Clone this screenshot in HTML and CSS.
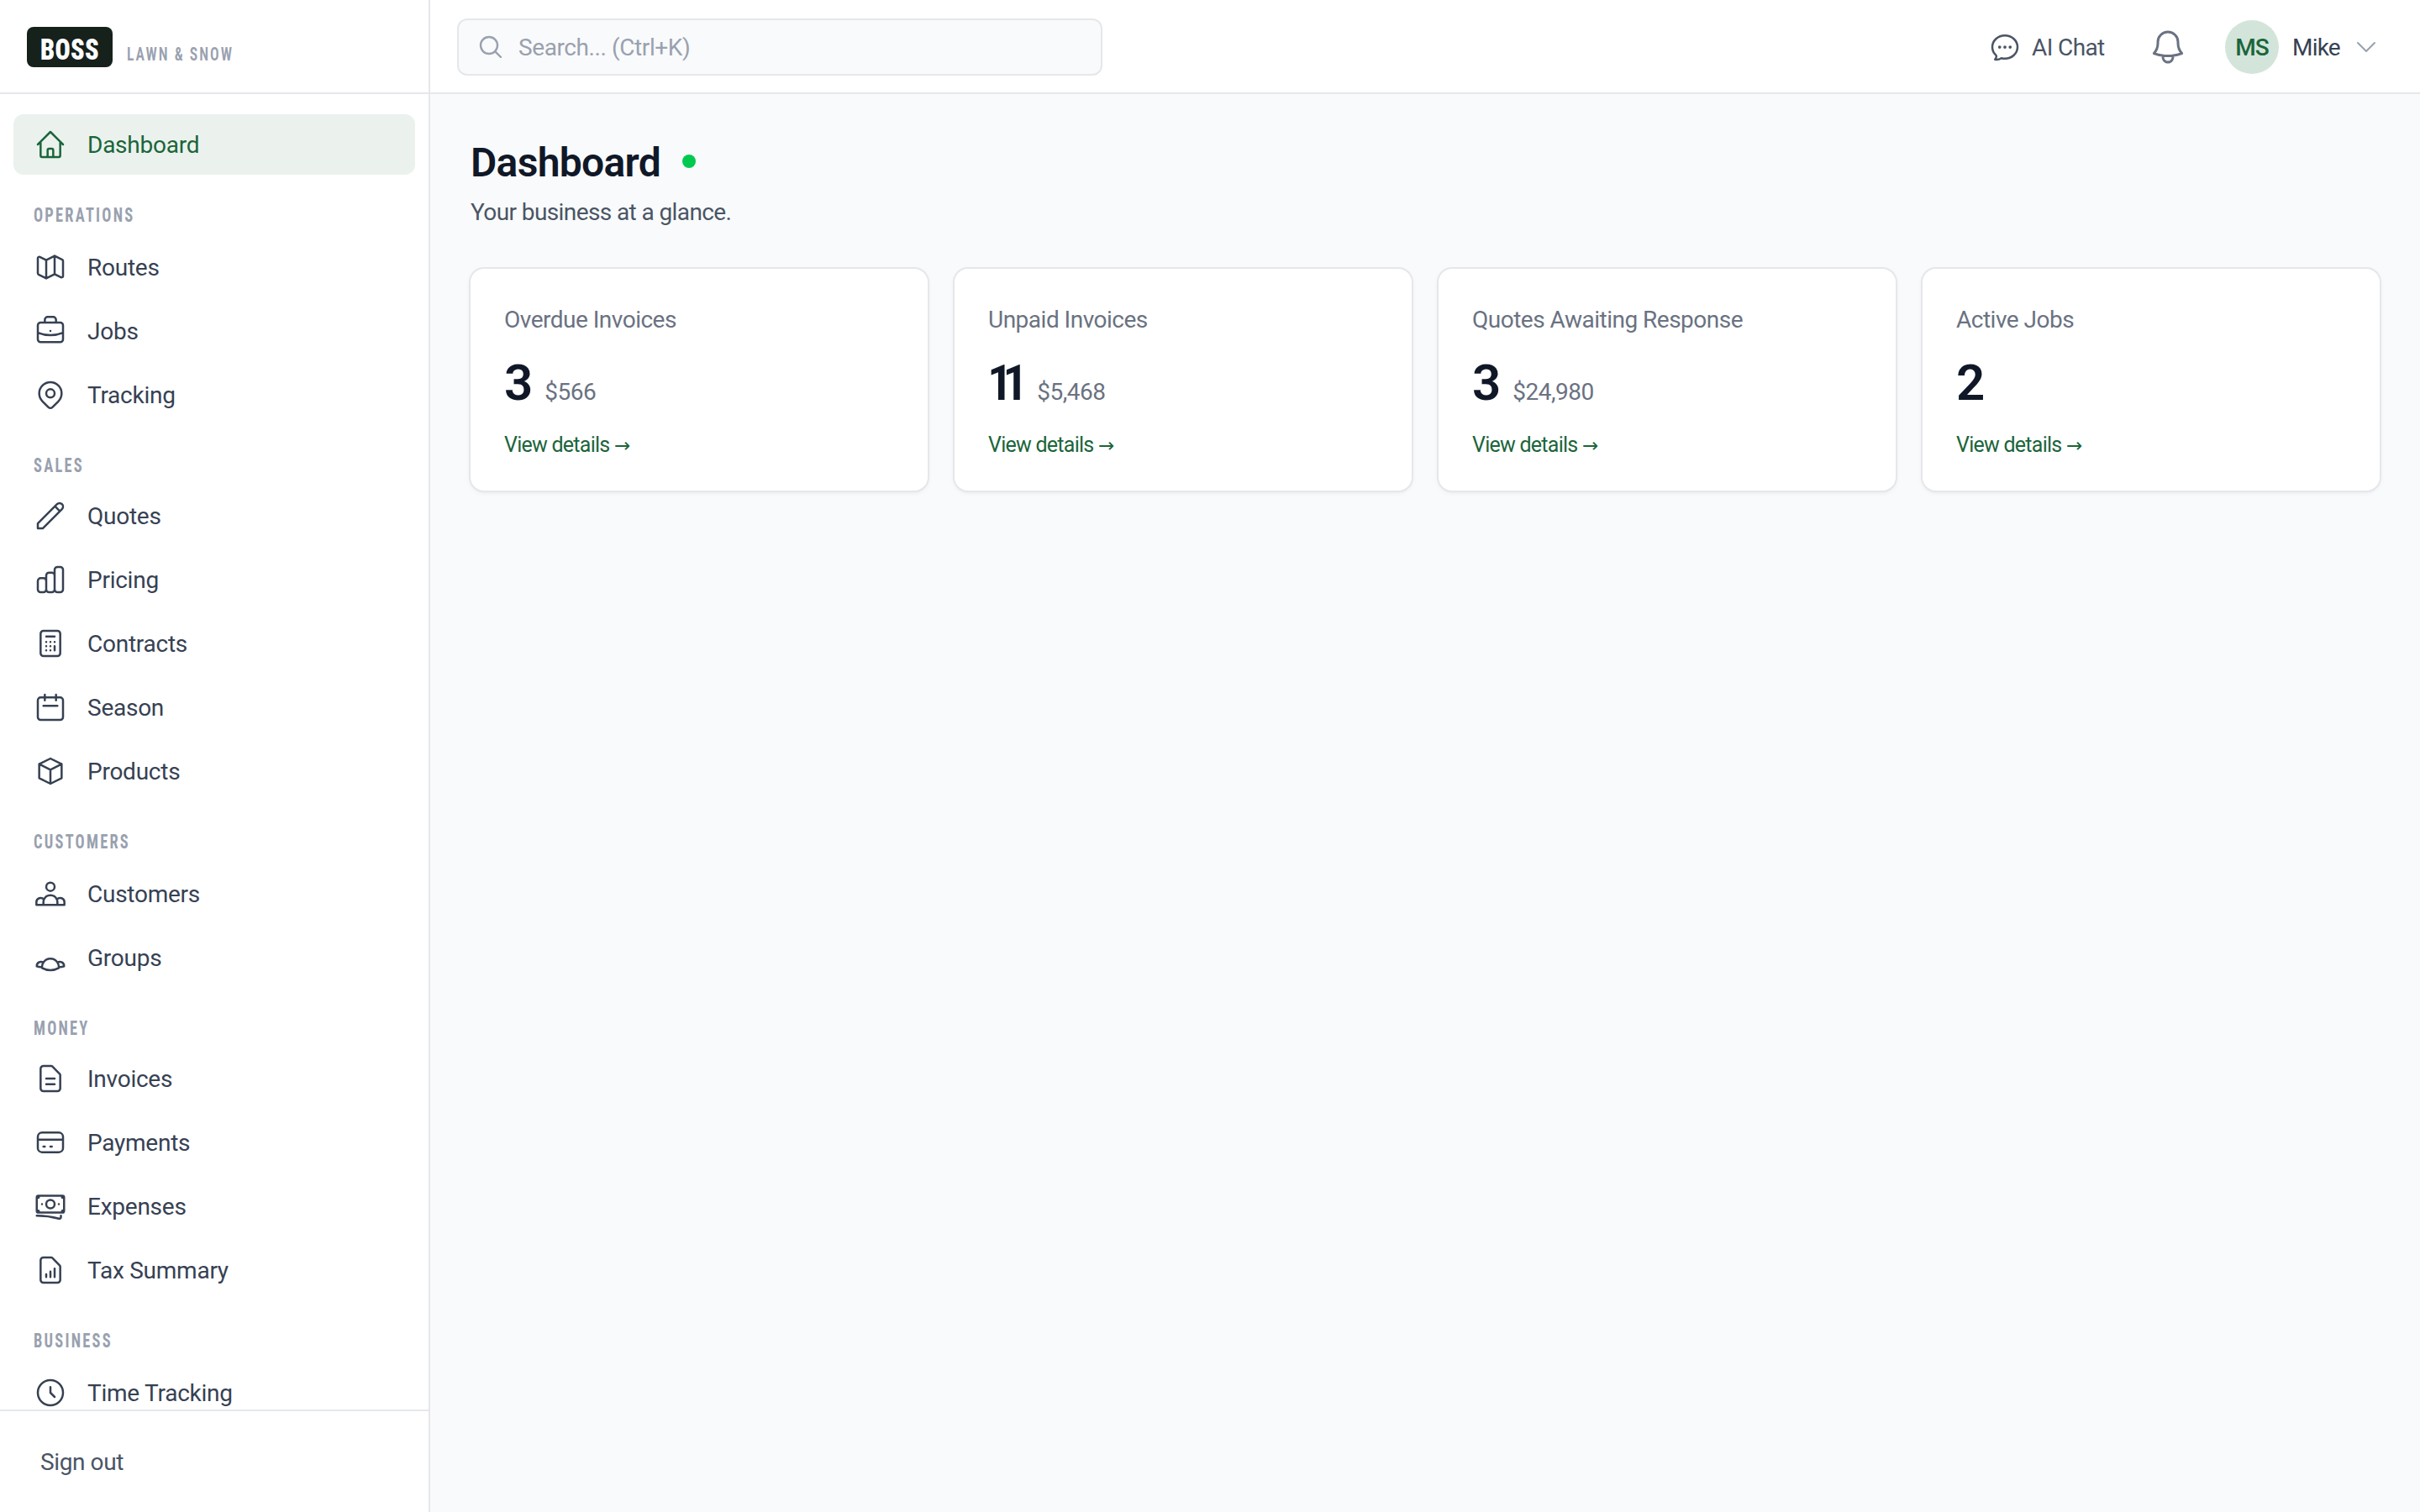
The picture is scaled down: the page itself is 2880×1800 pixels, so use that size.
FILE: index.html
```
<!DOCTYPE html>
<html lang="en">
<head>
    <meta charset="UTF-8">
    <meta name="viewport" content="width=device-width, initial-scale=1.0">
    <title>Dashboard</title>
    <link rel="stylesheet" href="styles.css">
</head>
<body>

    <aside class="sidebar">
        <div class="brand">
            <span class="brand-logo"><span class="brand-name">BOSS</span></span>
            <span class="brand-tag">LAWN &amp; SNOW</span>
        </div>

        <nav class="nav">
            <a class="nav-item active">
                <svg class="icon" viewBox="0 0 24 24"><path d="M3 12l2-2m0 0l7-7 7 7M5 10v10a1 1 0 001 1h3m10-11l2 2m-2-2v10a1 1 0 01-1 1h-3m-6 0a1 1 0 001-1v-4a1 1 0 011-1h2a1 1 0 011 1v4a1 1 0 001 1m-6 0h6"/></svg>
                Dashboard
            </a>

            <div class="nav-section">
                <div class="nav-label"><span>OPERATIONS</span></div>
                <a class="nav-item">
                    <svg class="icon" viewBox="0 0 24 24"><path d="M9 20l-5.447-2.724A1 1 0 013 16.382V5.618a1 1 0 011.447-.894L9 7m0 13l6-3m-6 3V7m6 10l4.553 2.276A1 1 0 0021 18.382V7.618a1 1 0 00-.553-.894L15 4m0 13V4m0 0L9 7"/></svg>
                    Routes
                </a>
                <a class="nav-item">
                    <svg class="icon" viewBox="0 0 24 24"><path d="M21 13.255A23.931 23.931 0 0112 15c-3.183 0-6.22-.62-9-1.745M16 6V4a2 2 0 00-2-2h-4a2 2 0 00-2 2v2m4 6h.01M5 20h14a2 2 0 002-2V8a2 2 0 00-2-2H5a2 2 0 00-2 2v10a2 2 0 002 2z"/></svg>
                    Jobs
                </a>
                <a class="nav-item">
                    <svg class="icon" viewBox="0 0 24 24"><path d="M17.657 16.657L13.414 20.9a1.998 1.998 0 01-2.827 0l-4.244-4.243a8 8 0 1111.314 0z"/><path d="M15 11a3 3 0 11-6 0 3 3 0 016 0z"/></svg>
                    Tracking
                </a>
            </div>

            <div class="nav-section">
                <div class="nav-label"><span>SALES</span></div>
                <a class="nav-item">
                    <svg class="icon" viewBox="0 0 24 24"><path d="M15.232 5.232l3.536 3.536m-2.036-5.036a2.5 2.5 0 113.536 3.536L6.5 21.036H3v-3.572L16.732 3.732z"/></svg>
                    Quotes
                </a>
                <a class="nav-item">
                    <svg class="icon" viewBox="0 0 24 24"><path d="M9 19v-6a2 2 0 00-2-2H5a2 2 0 00-2 2v6a2 2 0 002 2h2a2 2 0 002-2zm0 0V9a2 2 0 012-2h2a2 2 0 012 2v10m-6 0a2 2 0 002 2h2a2 2 0 002-2m0 0V5a2 2 0 012-2h2a2 2 0 012 2v14a2 2 0 01-2 2h-2a2 2 0 01-2-2z"/></svg>
                    Pricing
                </a>
                <a class="nav-item">
                    <svg class="icon" viewBox="0 0 24 24"><path d="M9 7h6m0 10v-3m-3 3h.01M9 17h.01M9 14h.01M12 14h.01M15 11h.01M12 11h.01M9 11h.01M7 21h10a2 2 0 002-2V5a2 2 0 00-2-2H7a2 2 0 00-2 2v14a2 2 0 002 2z"/></svg>
                    Contracts
                </a>
                <a class="nav-item">
                    <svg class="icon" viewBox="0 0 24 24"><path d="M8 7V3m8 4V3m-9 8h10M5 21h14a2 2 0 002-2V7a2 2 0 00-2-2H5a2 2 0 00-2 2v12a2 2 0 002 2z"/></svg>
                    Season
                </a>
                <a class="nav-item">
                    <svg class="icon" viewBox="0 0 24 24"><path d="M20 7l-8-4-8 4m16 0l-8 4m8-4v10l-8 4m0-10L4 7m8 4v10M4 7v10l8 4"/></svg>
                    Products
                </a>
            </div>

            <div class="nav-section">
                <div class="nav-label"><span>CUSTOMERS</span></div>
                <a class="nav-item">
                    <svg class="icon" viewBox="0 0 24 24"><path d="M17 20h5v-2a3 3 0 00-5.356-1.857M17 20H7m10 0v-2c0-.656-.126-1.283-.356-1.857M7 20H2v-2a3 3 0 015.356-1.857M7 20v-2c0-.656.126-1.283.356-1.857m0 0a5.002 5.002 0 019.288 0M15 7a3 3 0 11-6 0 3 3 0 016 0z"/></svg>
                    Customers
                </a>
                <a class="nav-item">
                    <svg class="icon" viewBox="0 0 24 24"><path d="M18 18.72a9.094 9.094 0 003.741-.479 3 3 0 00-4.682-2.72m.94 3.198l.001.031c0 .225-.012.447-.037.666A11.944 11.944 0 0112 21c-2.17 0-4.207-.576-5.963-1.584A6.062 6.062 0 016 18.719m12 0a5.971 5.971 0 00-.941-3.197m0 0A5.995 5.995 0 0012 12.75a5.995 5.995 0 00-5.058 2.772m0 0a3 3 0 00-4.681 2.72 8.986 8.986 0 003.74.477m.94-3.197a5.971 5.971 0 00-.94 3.197"/></svg>
                    Groups
                </a>
            </div>

            <div class="nav-section">
                <div class="nav-label"><span>MONEY</span></div>
                <a class="nav-item">
                    <svg class="icon" viewBox="0 0 24 24"><path d="M9 12h6m-6 4h6m2 5H7a2 2 0 01-2-2V5a2 2 0 012-2h5.586a1 1 0 01.707.293l5.414 5.414a1 1 0 01.293.707V19a2 2 0 01-2 2z"/></svg>
                    Invoices
                </a>
                <a class="nav-item">
                    <svg class="icon" viewBox="0 0 24 24"><path d="M3 10h18M7 15h1m4 0h1m-7 4h12a3 3 0 003-3V8a3 3 0 00-3-3H6a3 3 0 00-3 3v8a3 3 0 003 3z"/></svg>
                    Payments
                </a>
                <a class="nav-item">
                    <svg class="icon" viewBox="0 0 24 24"><path d="M2.25 18.75a60.07 60.07 0 0115.797 2.101c.727.198 1.453-.342 1.453-1.096V18.75M3.75 4.5v.75A.75.75 0 013 6h-.75m0 0v-.375c0-.621.504-1.125 1.125-1.125H20.25M2.25 6v9m18-10.5v.75c0 .414.336.75.75.75h.75m-1.5-1.5h.375c.621 0 1.125.504 1.125 1.125v9.75c0 .621-.504 1.125-1.125 1.125h-.375m1.5-1.5H21a.75.75 0 00-.75.75v.75m0 0H3.75m0 0h-.375a1.125 1.125 0 01-1.125-1.125V15m1.5 1.5v-.75A.75.75 0 003 15h-.75M15 10.5a3 3 0 11-6 0 3 3 0 016 0zm3 0h.008v.008H18V10.5zm-12 0h.008v.008H6V10.5z"/></svg>
                    Expenses
                </a>
                <a class="nav-item">
                    <svg class="icon" viewBox="0 0 24 24"><path d="M9 17v-2m3 2v-4m3 4v-6m2 10H7a2 2 0 01-2-2V5a2 2 0 012-2h5.586a1 1 0 01.707.293l5.414 5.414a1 1 0 01.293.707V19a2 2 0 01-2 2z"/></svg>
                    Tax Summary
                </a>
            </div>

            <div class="nav-section">
                <div class="nav-label"><span>BUSINESS</span></div>
                <a class="nav-item">
                    <svg class="icon" viewBox="0 0 24 24"><path d="M12 8v4l3 3m6-3a9 9 0 11-18 0 9 9 0 0118 0z"/></svg>
                    Time Tracking
                </a>
            </div>
        </nav>

        <div class="sidebar-footer">Sign out</div>
    </aside>

    <div class="page">
        <header class="topbar">
            <div class="search">
                <svg class="search-icon" viewBox="0 0 24 24"><path d="m21 21-5.197-5.197m0 0A7.5 7.5 0 1 0 5.196 5.196a7.5 7.5 0 0 0 10.607 10.607Z"/></svg>
                <span class="search-text">Search... (Ctrl+K)</span>
            </div>

            <div class="topbar-right">
                <div class="ai-chat">
                    <svg class="icon" viewBox="0 0 24 24"><path d="M8.625 12a.375.375 0 1 1-.75 0 .375.375 0 0 1 .75 0Zm0 0H8.25m4.125 0a.375.375 0 1 1-.75 0 .375.375 0 0 1 .75 0Zm0 0H12m4.125 0a.375.375 0 1 1-.75 0 .375.375 0 0 1 .75 0Zm0 0h-.375M21 12c0 4.556-4.03 8.25-9 8.25a9.764 9.764 0 0 1-2.555-.337A5.972 5.972 0 0 1 5.41 20.97a5.969 5.969 0 0 1-.474-.065 4.48 4.48 0 0 0 .978-2.025c.09-.457-.133-.901-.467-1.226C3.93 16.178 3 14.189 3 12c0-4.556 4.03-8.25 9-8.25s9 3.694 9 8.25Z"/></svg>
                    <span class="ai-chat-label">AI Chat</span>
                </div>
                <svg class="bell" viewBox="0 0 24 24"><path d="M14.857 17.082a23.848 23.848 0 0 0 5.454-1.31A8.967 8.967 0 0 1 18 9.75V9A6 6 0 0 0 6 9v.75a8.967 8.967 0 0 1-2.312 6.022c1.733.64 3.56 1.085 5.455 1.31m5.714 0a24.255 24.255 0 0 1-5.714 0m5.714 0a3 3 0 1 1-5.714 0"/></svg>
                <div class="user">
                    <span class="avatar">MS</span>
                    <span class="user-name">Mike</span>
                    <svg class="chevron" viewBox="0 0 24 24"><path d="m19.5 8.25-7.5 7.5-7.5-7.5"/></svg>
                </div>
            </div>
        </header>

        <main class="content">
            <div class="title-row">
                <h1>Dashboard</h1>
                <span class="status-dot"></span>
            </div>
            <p class="subtitle">Your business at a glance.</p>

            <div class="cards">
                <div class="card">
                    <div class="card-label">Overdue Invoices</div>
                    <div class="card-value"><span class="count">3</span><span class="amount">$566</span></div>
                    <a class="card-link">View details <span class="arrow">→</span></a>
                </div>
                <div class="card">
                    <div class="card-label">Unpaid Invoices</div>
                    <div class="card-value"><span class="count count-ones">11</span><span class="amount">$5,468</span></div>
                    <a class="card-link">View details <span class="arrow">→</span></a>
                </div>
                <div class="card">
                    <div class="card-label">Quotes Awaiting Response</div>
                    <div class="card-value"><span class="count">3</span><span class="amount">$24,980</span></div>
                    <a class="card-link">View details <span class="arrow">→</span></a>
                </div>
                <div class="card">
                    <div class="card-label">Active Jobs</div>
                    <div class="card-value"><span class="count">2</span></div>
                    <a class="card-link">View details <span class="arrow">→</span></a>
                </div>
            </div>
        </main>
    </div>

</body>
</html>
```

FILE: styles.css
```
* {
    box-sizing: border-box;
}

body {
    margin: 0;
    display: flex;
    height: 100vh;
    overflow: hidden;
    background: #f9fafb;
    font-family: Roboto, "Liberation Sans", sans-serif;
    font-size: 28px;
    line-height: 40px;
    color: #101828;
}

h1, p {
    margin: 0;
}

svg {
    flex-shrink: 0;
    fill: none;
    stroke: currentColor;
    stroke-width: 1.5;
    stroke-linecap: round;
    stroke-linejoin: round;
}

.icon {
    width: 40px;
    height: 40px;
}

/* Sidebar */
.sidebar {
    width: 512px;
    flex-shrink: 0;
    display: flex;
    flex-direction: column;
    background: #fff;
    border-right: 2px solid #e5e7eb;
}

.brand {
    height: 112px;
    flex-shrink: 0;
    display: flex;
    align-items: center;
    padding: 2px 0 0 32px;
    border-bottom: 2px solid #e5e7eb;
}

.brand-logo {
    width: 102px;
    height: 48px;
    padding: 7px 0 0 16px;
    border-radius: 8px;
    background: #16211c;
    color: #fff;
}

.brand-name {
    display: block;
    font-size: 35px;
    line-height: 41px;
    font-weight: 900;
    font-stretch: 75%;
    letter-spacing: 0.4px;
    transform: scaleX(0.86);
    transform-origin: left;
}

.brand-tag {
    margin: 17px 0 0 17px;
    font-size: 22px;
    line-height: 30px;
    font-weight: 600;
    font-stretch: 75%;
    letter-spacing: 2.5px;
    color: #99a1af;
    white-space: nowrap;
    transform: scaleX(0.8);
    transform-origin: left;
}

.nav {
    flex: 1;
    min-height: 0;
    overflow: hidden;
    padding: 24px 16px 0;
}

.nav-item {
    display: flex;
    align-items: center;
    gap: 24px;
    height: 72px;
    padding: 2px 24px 0;
    border-radius: 12px;
    letter-spacing: -0.25px;
    color: #364153;
}

.nav-item .icon {
    margin-bottom: 2px;
}

.nav-item + .nav-item {
    margin-top: 4px;
}

.nav-item.active {
    background: #ebf2ee;
    color: #1b653a;
}

.nav-label {
    height: 74px;
    padding: 33px 24px 0;
    font-size: 23px;
    line-height: 32px;
    font-weight: 700;
    font-stretch: 75%;
    letter-spacing: 2.8px;
    color: #99a1af;
}

.nav-section:nth-child(odd) .nav-label {
    height: 72px;
}

.nav-label span {
    display: inline-block;
    transform: scaleX(0.8);
    transform-origin: left;
}

.sidebar-footer {
    height: 122px;
    flex-shrink: 0;
    padding: 41px 48px 0;
    border-top: 2px solid #e5e7eb;
    letter-spacing: -0.4px;
    color: #4a5565;
}

/* Top bar */
.page {
    flex: 1;
    min-width: 0;
}

.topbar {
    height: 112px;
    display: flex;
    align-items: center;
    justify-content: space-between;
    padding: 2px 48px 0 32px;
    background: #fff;
    border-bottom: 2px solid #e5e7eb;
}

.search {
    width: 768px;
    height: 68px;
    display: flex;
    align-items: center;
    gap: 17px;
    padding: 0 22px;
    border: 2px solid #e5e7eb;
    border-radius: 12px;
    background: #f9fafb;
    letter-spacing: -0.4px;
    color: #99a1af;
}

.search-text {
    padding-top: 2px;
}

.search-icon {
    width: 32px;
    height: 32px;
    stroke-width: 1.8;
}

.topbar-right {
    display: flex;
    align-items: center;
}

.ai-chat {
    display: flex;
    align-items: center;
    gap: 12px;
    color: #4a5565;
}

.ai-chat-label {
    width: 88px;
    padding-top: 2px;
    white-space: nowrap;
    letter-spacing: -0.6px;
}

.bell {
    width: 48px;
    height: 48px;
    margin: 0 44px 0 50px;
    color: #6a7282;
}

.user {
    display: flex;
    align-items: center;
    gap: 16px;
}

.avatar {
    width: 64px;
    height: 64px;
    border-radius: 50%;
    background: #d3e5da;
    color: #1b653a;
    font-weight: 500;
    line-height: 66px;
    letter-spacing: -1px;
    text-align: center;
}

.user-name {
    width: 56px;
    padding-top: 2px;
    letter-spacing: -0.8px;
    color: #364153;
}

.chevron {
    width: 32px;
    height: 32px;
    color: #99a1af;
}

/* Content */
.content {
    padding: 50px 48px;
}

.title-row {
    display: flex;
    align-items: center;
    gap: 26px;
}

h1 {
    font-size: 48px;
    line-height: 64px;
    font-weight: 600;
    letter-spacing: -0.7px;
}

.status-dot {
    width: 16px;
    height: 16px;
    margin-bottom: 4px;
    border-radius: 50%;
    background: #00c950;
}

.subtitle {
    margin-top: 7px;
    letter-spacing: -0.6px;
    color: #4a5565;
}

.cards {
    display: grid;
    grid-template-columns: repeat(4, 1fr);
    gap: 32px;
    margin-top: 47px;
}

.card {
    height: 264px;
    padding: 41px 40px 39px;
    border-radius: 16px;
    background: #fff;
    box-shadow: 0 0 0 2px #e5e7eb, 0 2px 6px rgba(0, 0, 0, 0.08), 0 2px 4px -2px rgba(0, 0, 0, 0.08);
}

.card-label {
    letter-spacing: -0.5px;
    color: #6a7282;
}

.card-value {
    display: flex;
    align-items: baseline;
    gap: 14px;
    height: 72px;
    margin: 19px 0 22px;
}

.count {
    font-size: 60px;
    line-height: 72px;
    font-weight: 600;
}

.count-ones {
    margin: 0 9px 0 -1px;
    font-stretch: 75%;
    letter-spacing: -12px;
}

.amount {
    letter-spacing: -0.5px;
    color: #6a7282;
}

.card-link {
    display: block;
    font-size: 25px;
    line-height: 32px;
    letter-spacing: -0.75px;
    color: #1b653a;
}

.arrow {
    font-family: "DejaVu Sans", sans-serif;
    font-size: 23px;
}
```
